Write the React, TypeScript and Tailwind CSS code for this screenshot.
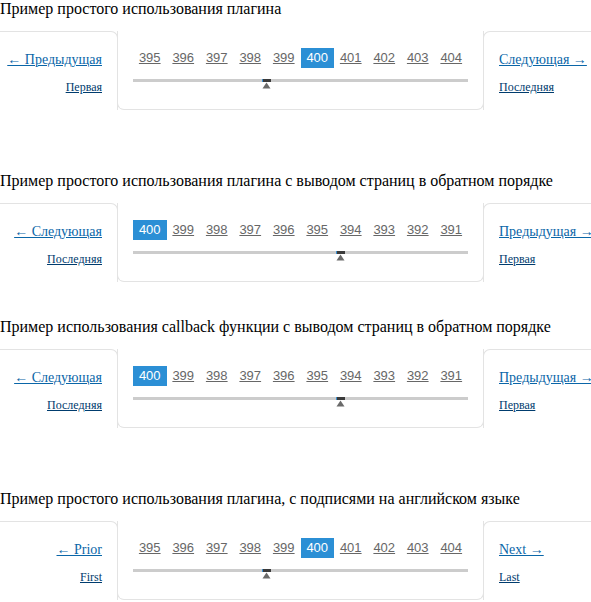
const serif = { fontFamily: '"Liberation Serif", "Times New Roman", serif' };

type PagerProps = {
  pages: number[];
  active: number;
  handle: number;
  left: { main: string; small: string };
  right: { main: string; small: string };
};

function Handle({ x }: { x: number }) {
  return (
    <div className="absolute top-0" style={{ left: x }}>
      <svg width="9" height="10" viewBox="0 0 9 10">
        <rect x="0" y="0" width="9" height="3" fill="#3a3a3a" />
        <polygon points="4.5,3.5 0.5,9.5 8.5,9.5" fill="#6a6a6a" />
        <rect x="0" y="0" width="1" height="3" fill="#3a8fd0" />
      </svg>
    </div>
  );
}

function Pager({ pages, active, handle, left, right }: PagerProps) {
  return (
    <div className="flex h-[79px] mt-[13px]">
      {/* left cell */}
      <div className="w-[118px] shrink-0 border-t border-r border-[#e3e3e3] rounded-tr-[7px] pt-[19px] pr-[15px] text-right" style={serif}>
        <div className="text-[14px] leading-[18px]">
          <a href="#" className="text-[#0a66a8] underline">{left.main}</a>
        </div>
        <div className="text-[12px] leading-[16px] mt-[10px]">
          <a href="#" className="text-[#003c6e] underline">{left.small}</a>
        </div>
      </div>

      {/* middle cell */}
      <div className="w-[367px] shrink-0 -ml-px border-l border-b border-r border-[#e3e3e3] rounded-b-[7px] px-[15px] pt-[17px]">
        <div className="flex" style={{ fontFamily: '"Liberation Sans", Arial, sans-serif' }}>
          {pages.map((p) =>
            p === active ? (
              <span key={p} className="flex-1 h-[20px] leading-[20px] text-center text-[13px] bg-[#2b8fd5] text-white">
                {p}
              </span>
            ) : (
              <span key={p} className="flex-1 h-[20px] leading-[20px] text-center text-[13px]">
                <a href="#" className="text-[#676767] underline">{p}</a>
              </span>
            )
          )}
        </div>
        <div className="relative mt-[11px] h-[3px] bg-[#cccccc]">
          <Handle x={handle} />
        </div>
      </div>

      {/* right cell */}
      <div className="flex-1 -ml-px border-t border-l border-[#e3e3e3] rounded-tl-[7px] pt-[19px] pl-[15px]" style={serif}>
        <div className="text-[14px] leading-[18px] whitespace-nowrap">
          <a href="#" className="text-[#0a66a8] underline">{right.main}</a>
        </div>
        <div className="text-[12px] leading-[16px] mt-[10px]">
          <a href="#" className="text-[#003c6e] underline">{right.small}</a>
        </div>
      </div>
    </div>
  );
}

const fwd = [395, 396, 397, 398, 399, 400, 401, 402, 403, 404];
const rev = [400, 399, 398, 397, 396, 395, 394, 393, 392, 391];

export default function App() {
  return (
    <div className="w-[591px] h-[602px] bg-white overflow-hidden text-black">
      <section>
        <div className="text-[16px] leading-[18px]" style={serif}>Пример простого использования плагина</div>
        <Pager
          pages={fwd}
          active={400}
          handle={129}
          left={{ main: "← Предыдущая", small: "Первая" }}
          right={{ main: "Следующая →", small: "Последняя" }}
        />
      </section>

      <section className="mt-[62px]">
        <div className="text-[16px] leading-[18px]" style={serif}>
          Пример простого использования плагина с выводом страниц в обратном порядке
        </div>
        <Pager
          pages={rev}
          active={400}
          handle={203}
          left={{ main: "← Следующая", small: "Последняя" }}
          right={{ main: "Предыдущая →", small: "Первая" }}
        />
      </section>

      <section className="mt-[36px]">
        <div className="text-[16px] leading-[18px]" style={serif}>
          Пример использования callback функции с выводом страниц в обратном порядке
        </div>
        <Pager
          pages={rev}
          active={400}
          handle={203}
          left={{ main: "← Следующая", small: "Последняя" }}
          right={{ main: "Предыдущая →", small: "Первая" }}
        />
      </section>

      <section className="mt-[62px]">
        <div className="text-[16px] leading-[18px]" style={serif}>
          Пример простого использования плагина, с подписями на английском языке
        </div>
        <Pager
          pages={fwd}
          active={400}
          handle={129}
          left={{ main: "← Prior", small: "First" }}
          right={{ main: "Next →", small: "Last" }}
        />
      </section>
    </div>
  );
}
